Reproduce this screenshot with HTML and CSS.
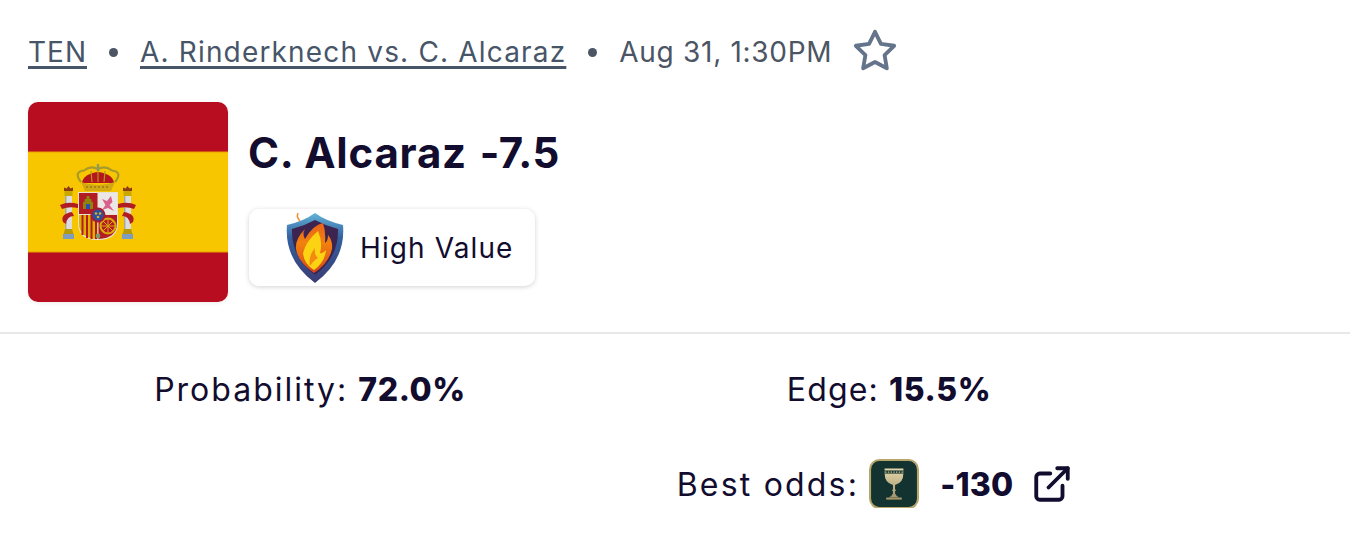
FILE: index.html
```html
<!DOCTYPE html>
<html lang="en">
<head>
    <meta charset="UTF-8">
    <meta name="viewport" content="width=device-width, initial-scale=1.0">
    <title>C. Alcaraz -7.5</title>
    <link rel="stylesheet" href="styles.css">
</head>
<body>

    <div class="pick-header">
        <div class="meta-row">
            <a href="#" class="meta-link meta-league">TEN</a>
            <span class="meta-dot"></span>
            <a href="#" class="meta-link meta-match">A. Rinderknech vs. C. Alcaraz</a>
            <span class="meta-dot"></span>
            <span class="meta-date">Aug 31, 1:30PM</span>
            <svg class="star-icon" viewBox="0 0 24 24">
                <polygon points="12 2 15.09 8.26 22 9.27 17 14.14 18.18 21.02 12 17.77 5.82 21.02 7 14.14 2 9.27 8.91 8.26"/>
            </svg>
        </div>

        <div class="pick-row">
            <svg class="flag" viewBox="0 0 200 200">
                <defs>
                    <filter id="soft"><feGaussianBlur stdDeviation="0.4"/></filter>
                </defs>
                <rect width="200" height="200" fill="#b80c20"/>
                <rect y="49.5" width="200" height="101" fill="#e8a000"/>
                <rect y="50.5" width="200" height="99" fill="#f7c600"/>
                <g transform="translate(27 53)" filter="url(#soft)">
                    <!-- left pillar -->
                    <rect x="10" y="41" width="7" height="33" fill="#dcdcdc"/>
                    <rect x="10" y="41" width="1.5" height="33" fill="#a8a8a0"/>
                    <rect x="9.5" y="36" width="8" height="5" fill="#c9a900"/>
                    <path d="M10 74 H17 L18.5 79 H8.5 Z" fill="#b59a10"/>
                    <rect x="8" y="79" width="11" height="5" fill="#7d9cc0"/>
                    <path d="M9 36 V32.5 L11.5 33.5 L13.5 31 L15.5 33.5 L18 32.5 V36 Z" fill="#8e3a10"/>
                    <!-- right pillar -->
                    <rect x="69" y="41" width="7" height="33" fill="#dcdcdc"/>
                    <rect x="69" y="41" width="1.5" height="33" fill="#a8a8a0"/>
                    <rect x="68.5" y="36" width="8" height="5" fill="#c9a900"/>
                    <path d="M69 74 H76 L77.5 79 H67.5 Z" fill="#b59a10"/>
                    <rect x="67" y="79" width="11" height="5" fill="#7d9cc0"/>
                    <path d="M68 36 V32.5 L70.5 33.5 L72.5 31 L74.5 33.5 L77 32.5 V36 Z" fill="#8e3a10"/>
                    <!-- ribbons -->
                    <path d="M5 50 Q13 46 23 49 L23 53 Q14 51 7 54 Z M8 67 Q5 59 17 57 L19 61 Q12 61 11 69 Z" fill="#b01c20"/>
                    <path d="M81 50 Q73 46 63 49 L63 53 Q72 51 79 54 Z M78 67 Q81 59 69 57 L67 61 Q74 61 75 69 Z" fill="#b01c20"/>
                    <!-- crown -->
                    <path d="M26 27 Q18 17 29 15.5 Q36 10 43 14 Q50 10 57 15.5 Q68 17 60 27" fill="none" stroke="#a89a2a" stroke-width="2.2"/>
                    <path d="M27 28 Q28 19 43 17 Q58 19 59 28 Z" fill="#b4141f"/>
                    <path d="M36 16 L37 27 M50 16 L49 27 M43 14 V27" stroke="#b39a20" stroke-width="1.2"/>
                    <path d="M26 27 Q43 33 60 27 L56 36 H30 Z" fill="#d0a812"/>
                    <path d="M31 32 H55" stroke="#8e5a10" stroke-width="1.2" stroke-dasharray="2 2"/>
                    <rect x="41.8" y="9" width="2.4" height="7" fill="#8f9a60"/>
                    <!-- shield -->
                    <path d="M23 37 H63 V68 Q63 85 43 85 Q23 85 23 68 Z" fill="#e8e2d0"/>
                    <rect x="24" y="38" width="18.5" height="21" fill="#b21c22"/>
                    <rect x="43.5" y="38" width="18.5" height="21" fill="#ece7e7"/>
                    <path d="M24 60 H42.5 V84 Q24 83 24 68 Z" fill="#e0b000"/>
                    <path d="M27.5 60 V80 M32 60 V83 M36.5 60 V84 M41 60 V84" stroke="#b21c22" stroke-width="2"/>
                    <path d="M43.5 60 H62 V68 Q62 83 43.5 84 Z" fill="#b21c22"/>
                    <circle cx="53" cy="71" r="7.5" fill="none" stroke="#d8a810" stroke-width="2"/>
                    <path d="M53 63 V79 M45 71 H61 M47.5 65.5 L58.5 76.5 M58.5 65.5 L47.5 76.5" stroke="#d8a810" stroke-width="1"/>
                    <path d="M28 54 V47 H29.5 V44 H31.5 V41 H34.5 V44 H36.5 V47 H38 V54 Z" fill="#8f8210"/>
                    <rect x="31" y="49" width="4" height="5" fill="#2a4fb0"/>
                    <path d="M47 55 L50.5 50 L47 44 L52 46 L56 41 L57.5 47 L54.5 50 L59 56 L53 53 Z" fill="#d8608a"/>
                    <circle cx="43" cy="60" r="7.5" fill="#a81c30"/>
                    <circle cx="43" cy="60" r="5.5" fill="#2a4fa0"/>
                    <circle cx="41" cy="58.5" r="1.3" fill="#d8b020"/>
                    <circle cx="45" cy="58.5" r="1.3" fill="#d8b020"/>
                    <circle cx="43" cy="62" r="1.3" fill="#d8b020"/>
                    <circle cx="43" cy="81" r="2.4" fill="#7f9a70"/>
                </g>
            </svg>

            <div class="pick-info">
                <h1 class="pick-title">C. Alcaraz <span class="pick-line">-7.5</span></h1>
                <div class="value-badge">
                    <svg class="shield-icon" viewBox="0 0 60 72">
                        <defs>
                            <linearGradient id="rim" x1="0" y1="0" x2="0" y2="1">
                                <stop offset="0" stop-color="#63b4d8"/>
                                <stop offset="0.35" stop-color="#33609f"/>
                                <stop offset="1" stop-color="#3b3c74"/>
                            </linearGradient>
                            <linearGradient id="flame" x1="0" y1="1" x2="0" y2="0">
                                <stop offset="0" stop-color="#d8481a"/>
                                <stop offset="0.6" stop-color="#f2810f"/>
                                <stop offset="1" stop-color="#e8621a"/>
                            </linearGradient>
                        </defs>
                        <path d="M30 1 Q41 9 58 13 Q61 48 30 71 Q-1 48 2 13 Q19 9 30 1 Z" fill="url(#rim)"/>
                        <path d="M30 8 Q41 14 53 17 Q54 45 30 63 Q6 45 7 17 Q19 14 30 8 Z" fill="#3d2450"/>
                        <path d="M38 11 Q28 13 20 27 Q17 22 20 17 Q10 27 11 37 Q13 50 29 61 Q44 51 47 37 Q48 29 43 23 Q43 29 40 31 Q41 20 38 11 Z" fill="url(#flame)"/>
                        <path d="M33 19 Q21 29 18 41 Q19 52 29 58 Q40 50 41 38 Q38 42 35 41 Q38 30 33 19 Z" fill="#fbd312"/>
                        <path d="M30 36 Q23 44 25 54 Q29 48 33 46 Q29 43 30 36 Z" fill="#f58a12"/>
                        <path d="M13 1 Q11 5 15 9" fill="none" stroke="#f0943a" stroke-width="1.6"/>
                    </svg>
                    <span class="badge-label">High Value</span>
                </div>
            </div>
        </div>
    </div>

    <div class="stats">
        <div class="stat"><span class="prob-label">Probability:</span> <b>72.0%</b></div>
        <div class="stat"><span class="edge-label">Edge:</span> <b>15.5%</b></div>
        <div class="stat best-odds">
            <span class="odds-label">Best odds:</span>
            <svg class="book-icon" viewBox="0 0 48 48">
                <defs>
                    <linearGradient id="gold" x1="0" y1="0" x2="0" y2="1">
                        <stop offset="0" stop-color="#e4d9ac"/>
                        <stop offset="1" stop-color="#a3946a"/>
                    </linearGradient>
                </defs>
                <rect x="1" y="1" width="46" height="46" rx="9" fill="#123330" stroke="#b7a66a" stroke-width="2"/>
                <path d="M15 9 H33 V14 Q33 23 25 25 V29 L26 30 L25 31 V33 Q26.5 36 29 37 H19 Q21.5 36 23 33 V31 L22 30 L23 29 V25 Q15 23 15 14 Z" fill="url(#gold)"/>
                <rect x="16.5" y="37" width="15" height="2" fill="#a3946a"/>
                <rect x="15" y="11" width="18" height="3" fill="#123330"/>
                <path d="M15.5 12.5 H33" stroke="#cdbf90" stroke-width="1.2" stroke-dasharray="1.4 1.2"/>
            </svg>
            <b class="odds-value">-130</b>
            <svg class="link-icon" viewBox="0 0 24 24">
                <path d="M18 13v6a2 2 0 0 1-2 2H5a2 2 0 0 1-2-2V8a2 2 0 0 1 2-2h6"/>
                <path d="M15 3h6v6"/>
                <path d="M10 14L21 3"/>
            </svg>
        </div>
    </div>

</body>
</html>
```

FILE: styles.css
```css
body {
    font-family: Inter, "Open Sans", sans-serif;
    margin: 0;
    background-color: white;
    color: #120c2e;
}
.pick-header {
    height: 334px;
    box-sizing: border-box;
    padding: 29px 28px 0;
    border-bottom: 2px solid #e8e8e8;
}
.meta-row {
    display: flex;
    align-items: center;
    height: 46px;
    font-size: 28px;
    color: #4b5563;
}
.meta-link {
    color: #475569;
    text-decoration: underline;
    text-decoration-thickness: 3px;
    text-underline-offset: 4px;
}
.meta-league { letter-spacing: 1px; }
.meta-match { letter-spacing: 1.17px; }
.meta-date { letter-spacing: 0.7px; }
.meta-dot {
    width: 9px;
    height: 9px;
    border-radius: 50%;
    background-color: #4b5563;
    margin: 0 22px;
}
.star-icon {
    width: 46px;
    height: 46px;
    margin-left: 20px;
    margin-top: -2px;
    fill: none;
    stroke: #64748b;
    stroke-width: 2;
    stroke-linejoin: round;
}
.pick-row {
    display: flex;
    gap: 20px;
    margin-top: 27px;
}
.flag {
    width: 200px;
    height: 200px;
    border-radius: 10px;
    box-shadow: 0 1px 4px rgba(0, 0, 0, 0.08);
}
.pick-title {
    font-size: 42px;
    font-weight: 700;
    line-height: 48px;
    letter-spacing: 0.8px;
    margin: 27px 0 0;
}
.pick-line {
    margin-left: 2px;
    letter-spacing: 0.5px;
}
.value-badge {
    display: flex;
    align-items: center;
    width: 286px;
    height: 77px;
    box-sizing: border-box;
    margin-top: 32px;
    margin-left: 1px;
    padding-left: 36px;
    border-radius: 10px;
    box-shadow: 0 1px 5px rgba(0, 0, 0, 0.18);
}
.shield-icon {
    width: 60px;
    height: 72px;
    flex-shrink: 0;
}
.badge-label {
    font-size: 28px;
    letter-spacing: 1.1px;
    margin-left: 15px;
}
.stats {
    display: grid;
    grid-template-columns: 620px 538px;
    row-gap: 47px;
    padding-top: 31px;
    font-size: 32px;
}
.stat {
    display: flex;
    justify-content: center;
    align-items: center;
    gap: 10px;
    height: 48px;
}
.stat b {
    font-weight: 800;
    letter-spacing: 0.6px;
}
.prob-label { letter-spacing: 2px; }
.edge-label { letter-spacing: 1.2px; }
.odds-label { letter-spacing: 2.2px; }
.best-odds {
    grid-column: 2;
    margin-right: 28px;
}
.book-icon {
    width: 50px;
    height: 50px;
    flex-shrink: 0;
}
.stat .odds-value {
    margin-left: 11px;
    letter-spacing: 0.2px;
}
.link-icon {
    width: 42px;
    height: 42px;
    margin-left: 8px;
    fill: none;
    stroke: #120c2e;
    stroke-width: 2.2;
    stroke-linecap: round;
    stroke-linejoin: round;
}
```
